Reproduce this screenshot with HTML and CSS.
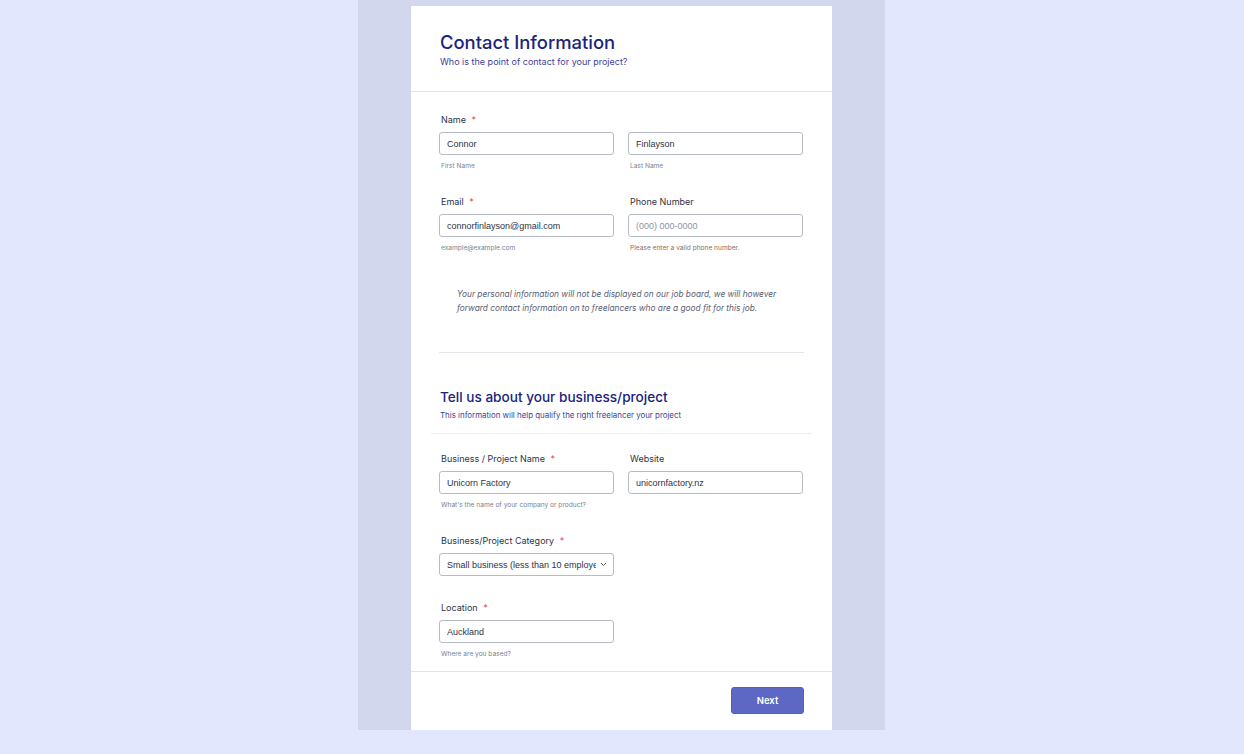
FILE: index.html
```html
<!DOCTYPE html>
<html>
<head>
<meta charset="utf-8">
<link rel="stylesheet" href="styles.css">
</head>
<body>
<div class="page">
  <div class="column">
    <form class="card">
      <div class="card-head">
        <h1 class="title">Contact Information</h1>
        <p class="subtitle">Who is the point of contact for your project?</p>
      </div>
      <div class="card-body">
        <div class="field">
          <div class="label">Name <span class="req">*</span></div>
          <div class="pair">
            <div class="cell">
              <div class="input">Connor</div>
              <div class="hint">First Name</div>
            </div>
            <div class="cell">
              <div class="input">Finlayson</div>
              <div class="hint">Last Name</div>
            </div>
          </div>
        </div>
        <div class="pair field">
          <div class="cell">
            <div class="label">Email <span class="req">*</span></div>
            <div class="input">connorfinlayson@gmail.com</div>
            <div class="hint">example@example.com</div>
          </div>
          <div class="cell">
            <div class="label">Phone Number</div>
            <div class="input placeholder">(000) 000-0000</div>
            <div class="hint warn">Please enter a valid phone number.</div>
          </div>
        </div>
        <p class="note">Your personal information will not be displayed on our job board, we will however forward contact information on to freelancers who are a good fit for this job.</p>
        <hr class="rule">
        <div class="section-head">
          <h2 class="section-title">Tell us about your business/project</h2>
          <p class="section-sub">This information will help qualify the right freelancer your project</p>
        </div>
        <hr class="rule light">
        <div class="pair field">
          <div class="cell">
            <div class="label">Business / Project Name <span class="req">*</span></div>
            <div class="input">Unicorn Factory</div>
            <div class="hint">What's the name of your company or product?</div>
          </div>
          <div class="cell">
            <div class="label">Website</div>
            <div class="input">unicornfactory.nz</div>
          </div>
        </div>
        <div class="field half sel-field">
          <div class="label">Business/Project Category <span class="req">*</span></div>
          <div class="input select"><span class="sel-text">Small business (less than 10 employees)</span>
            <svg class="chev" width="7" height="5" viewBox="0 0 7 5"><path d="M1 1l2.5 2.5L6 1" fill="none" stroke="#555" stroke-width="1"/></svg>
          </div>
        </div>
        <div class="field half last">
          <div class="label">Location <span class="req">*</span></div>
          <div class="input">Auckland</div>
          <div class="hint">Where are you based?</div>
        </div>
      </div>
      <div class="card-foot">
        <button type="button" class="next">Next</button>
      </div>
    </form>
  </div>
</div>
</body>
</html>
```
FILE: styles.css
```css
* { box-sizing: border-box; }
html, body { margin: 0; padding: 0; }
body {
  background: #e3e7fd;
  font-family: Inter, "Noto Sans", sans-serif;
  color: #333;
  height: 754px;
  overflow: hidden;
}
.page {
  display: flex;
  justify-content: center;
}
.column {
  margin-left: -1px;
  width: 527px;
  height: 730px;
  background: #d3d7ee;
  display: flex;
  justify-content: center;
  padding-top: 6px;
}
.card {
  width: 421px;
  background: #fff;
  display: flex;
  flex-direction: column;
  margin: 0;
}
.card-head {
  padding: 25px 29px 0;
  height: 86px;
  border-bottom: 1px solid #e3e4ea;
}
.title {
  margin: 0;
  font-size: 18.4px;
  line-height: 22px;
  font-weight: 500;
  color: #1a237e;
}
.subtitle {
  margin: 3px 0 0;
  font-size: 9px;
  line-height: 12px;
  color: #3e4199;
}
.card-body {
  padding: 22px 28px 0;
  height: 579px;
}
.field { margin-bottom: 25px; }
.pair {
  display: flex;
  gap: 14px;
}
.cell { width: 175px; }
.half { width: 175px; }
.label {
  font-size: 9px;
  line-height: 12px;
  color: #2c3345;
  padding-left: 2px;
  margin-bottom: 6px;
}
.req { color: #e5484d; margin-left: 3px; }
.input {
  height: 23px;
  border: 1px solid #b7bbc7;
  border-radius: 3px;
  font-family: "Liberation Sans", Arial, sans-serif;
  font-size: 9px;
  line-height: 22px;
  padding: 0 7px;
  color: #2c3345;
  white-space: nowrap;
  overflow: hidden;
}
.placeholder { color: #8c92a3; }
.hint {
  font-size: 6.6px;
  line-height: 9px;
  margin-top: 7px;
  padding-left: 2px;
  color: #7a7f8f;
}
.hint.warn { color: #8a6a62; }
.note {
  margin: 34px 0 0 18px;
  width: 340px;
  font-size: 8.3px;
  line-height: 14px;
  font-style: italic;
  color: #5b6072;
}
.rule {
  border: 0;
  border-top: 1px solid #e6e7ec;
  margin: 37px 0 0;
}
.rule.light {
  margin: 13px -8px 0;
  border-top-color: #eeeef2;
}
.section-head { padding: 36px 1px 0; }
.section-title {
  margin: 0;
  font-size: 13.6px;
  line-height: 17px;
  font-weight: 500;
  color: #1a237e;
}
.section-sub {
  margin: 4px 0 0;
  font-size: 7.9px;
  line-height: 10px;
  color: #3e4199;
}
.rule.light + .field { margin-top: 19px; }
.sel-field { margin-bottom: 26px; }
.select {
  display: flex;
  align-items: center;
  justify-content: space-between;
  padding-right: 6px;
}
.sel-text { overflow: hidden; white-space: nowrap; width: 149px; }
.chev { flex: none; }
.last { margin-bottom: 0; }
.card-foot {
  border-top: 1px solid #e3e4ea;
  flex: 1;
  display: flex;
  justify-content: flex-end;
  align-items: flex-start;
  padding: 15px 28px 0;
}
.next {
  width: 73px;
  height: 27px;
  border: 1px solid #4f5fd1;
  border-radius: 3px;
  background: #5c68c3;
  color: #fff;
  font-family: Inter, sans-serif;
  font-size: 9.5px;
  font-weight: 600;
}
```
